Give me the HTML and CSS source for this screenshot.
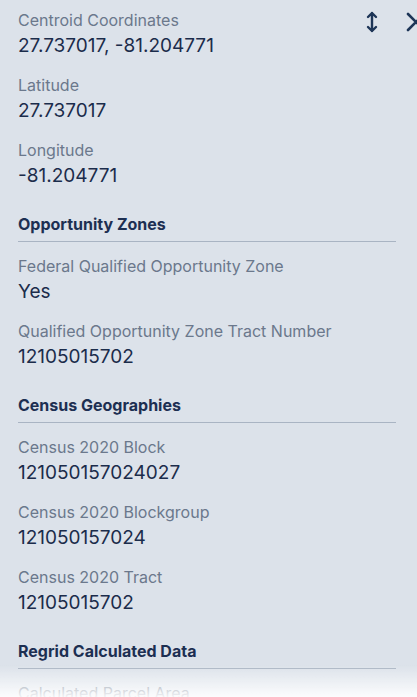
FILE: index.html
```html
<!DOCTYPE html>
<html lang="en">
<head>
    <meta charset="UTF-8">
    <meta name="viewport" content="width=device-width, initial-scale=1.0">
    <title>Parcel details</title>
    <link rel="stylesheet" href="styles.css">
</head>
<body>
    <div id="panel">
        <div class="tools">
            <a href="javascript:void(0);" class="tool">
                <svg width="12" height="22" viewBox="0 0 12 22"><path d="M6 2v18M2 6l4-4 4 4M2 16l4 4 4-4" fill="none" stroke="#1d3557" stroke-width="2.4" stroke-linecap="round" stroke-linejoin="round"/></svg>
            </a>
            <a href="javascript:void(0);" class="tool">
                <svg width="20" height="20" viewBox="0 0 20 20"><path d="M2 2l16 16M18 2L2 18" fill="none" stroke="#1d3557" stroke-width="2.6" stroke-linecap="round"/></svg>
            </a>
        </div>
        <dl class="group">
            <div class="item">
                <dt>Centroid Coordinates</dt>
                <dd>27.737017, -81.204771</dd>
            </div>
            <div class="item">
                <dt>Latitude</dt>
                <dd>27.737017</dd>
            </div>
            <div class="item">
                <dt>Longitude</dt>
                <dd>-81.204771</dd>
            </div>
        </dl>
        <h3>Opportunity Zones</h3>
        <dl class="group">
            <div class="item">
                <dt>Federal Qualified Opportunity Zone</dt>
                <dd>Yes</dd>
            </div>
            <div class="item">
                <dt>Qualified Opportunity Zone Tract Number</dt>
                <dd>12105015702</dd>
            </div>
        </dl>
        <h3>Census Geographies</h3>
        <dl class="group">
            <div class="item">
                <dt>Census 2020 Block</dt>
                <dd>121050157024027</dd>
            </div>
            <div class="item">
                <dt>Census 2020 Blockgroup</dt>
                <dd>121050157024</dd>
            </div>
            <div class="item">
                <dt>Census 2020 Tract</dt>
                <dd>12105015702</dd>
            </div>
        </dl>
        <h3>Regrid Calculated Data</h3>
        <dl class="group">
            <div class="item">
                <dt>Calculated Parcel Area</dt>
            </div>
        </dl>
    </div>
    <div class="fade"></div>
</body>
</html>
```

FILE: styles.css
```css
html,body{
    margin: 0;
    padding: 0;
    height: 100%;
    overflow: hidden;
    background-color: #dce2ea;
}
body{
    font-family: Inter, "Liberation Sans", sans-serif;
}
#panel{
    position: relative;
    padding: 9px 21px 0 18px;
}
.tools{
    position: absolute;
    top: 11px;
    right: -9px;
    display: flex;
    gap: 28px;
    align-items: flex-start;
}
.tool{
    display: block;
    line-height: 0;
}
.tool:last-child{
    margin-top: 1px;
}
.group{
    margin: 0;
    display: flex;
    flex-direction: column;
    gap: 16px;
}
.item dt{
    margin-bottom: 3px;
    font-size: 16px;
    line-height: 22px;
    color: #6b788c;
}
.item dd{
    margin: 0;
    font-size: 19px;
    line-height: 24px;
    color: #1b2c4b;
}
h3{
    margin: 26px 0 13px;
    padding-bottom: 7px;
    border-bottom: 1px solid #a9b4c3;
    font-size: 16px;
    line-height: 20px;
    font-weight: 700;
    color: #1d2f52;
}
.fade{
    position: fixed;
    left: 0;
    right: 0;
    bottom: 0;
    height: 32px;
    background: linear-gradient(to bottom, rgba(255,255,255,0), rgba(255,255,255,0.9));
}
```
